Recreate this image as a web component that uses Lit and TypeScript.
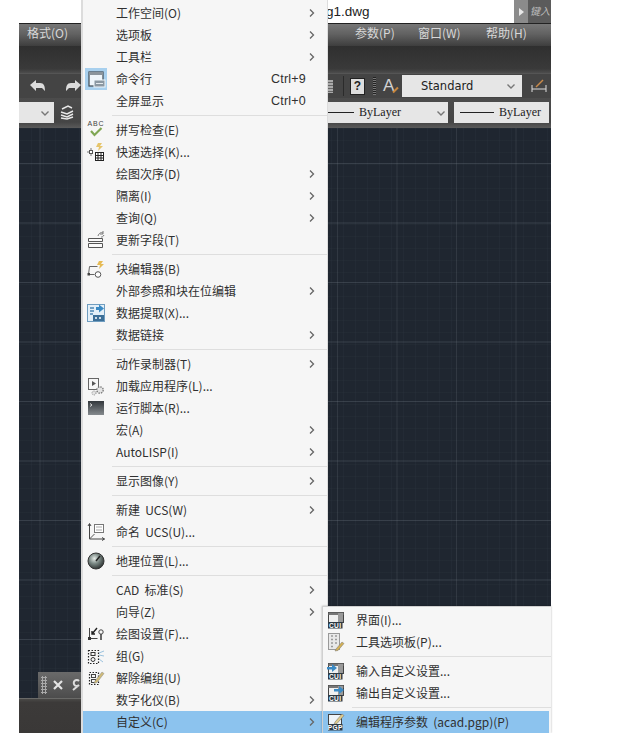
import { LitElement, html, svg, css } from "lit";
import { customElement } from "lit/decorators.js";

const I = {
  cmd: html`<svg viewBox="0 0 22 22" width="22" height="22"><rect x="4" y="4" width="14" height="14" fill="#eef5fa" stroke="#3f4a52" stroke-width="1.200"/><rect x="4" y="4" width="14" height="3" fill="#8a949c"/><rect x="9" y="12" width="11" height="7" fill="#8b98a2" stroke="#eef5fa"/><path d="M11 15.500h7" stroke="#e4eaee"/></svg>`,
  abc: html`<svg viewBox="0 0 22 22" width="22" height="22"><text x="11" y="7" text-anchor="middle" font-size="7" font-family="Liberation Sans" letter-spacing=".8" fill="#444">ABC</text><path d="M6 12l3.500 4 7-7" fill="none" stroke="#7fa653" stroke-width="2.200"/></svg>`,
  quick: html`<svg viewBox="0 0 22 22" width="22" height="22"><path d="M2 11h6M6 7v8" stroke="#777"/><rect x="4.500" y="9.500" width="3" height="3" fill="#fff" stroke="#555"/><path d="M13 2h4l-2 3h3l-5 5 1-4h-3z" fill="#e6c56c"/><rect x="10.500" y="11.500" width="8" height="8" fill="#fff" stroke="#222"/><path d="M13 12v8M16 12v8M11 14.500h8M11 17h8" stroke="#222"/></svg>`,
  field: html`<svg viewBox="0 0 22 22" width="22" height="22"><path d="M3.500 12.500h14v-3h-14zM3.500 14.500h14v4h-14z" fill="#fafafa" stroke="#555"/><path d="M13 7c1-3 3-4 5-3m1 2c-1 2-2 2-3 2" fill="none" stroke="#777"/><path d="M18 2v3h-3" fill="none" stroke="#777"/></svg>`,
  block: html`<svg viewBox="0 0 22 22" width="22" height="22"><path d="M4.500 8.500h8M4.500 8.500l-1 8h6" fill="none" stroke="#666"/><circle cx="13" cy="16.500" r="2.800" fill="#fff" stroke="#555"/><rect x="2.500" y="15" width="2.500" height="2.500" fill="#444"/><path d="M14 3h4l-2 3h3l-5 5 1-4h-3z" fill="#e6bb55"/></svg>`,
  data: html`<svg viewBox="0 0 22 22" width="22" height="22"><rect x="2.500" y="2.500" width="17" height="17" fill="#e3eff8" stroke="#6f9dc0"/><path d="M5 6h4M5 9h4M5 12h3" stroke="#4c87b2" stroke-width="1.500"/><path d="M11 5h3V2.500l5 4-5 4V8h-3z" fill="#3b8ac4"/><rect x="8" y="13" width="11" height="6" fill="#3c6f98"/><path d="M10 16h2M14 16h2" stroke="#fff" stroke-width="1.500"/></svg>`,
  load: html`<svg viewBox="0 0 22 22" width="22" height="22"><rect x="3.500" y="3.500" width="10" height="11" fill="#f6f6f6" stroke="#666"/><path d="M7 6l4 2.500-4 2.500z" fill="#555"/><circle cx="15" cy="15" r="3.200" fill="#e4e4e4" stroke="#777" stroke-width="1.300" stroke-dasharray="1.500 1"/><circle cx="9" cy="18" r="2" fill="#e4e4e4" stroke="#888" stroke-dasharray="1 1"/></svg>`,
  script: html`<svg viewBox="0 0 22 22" width="22" height="22"><defs><linearGradient id="sc" x1="0" y1="0" x2="0" y2="1"><stop offset="0" stop-color="#33383c"/><stop offset="1" stop-color="#858a8e"/></linearGradient></defs><rect x="3" y="4" width="16" height="14" fill="url(#sc)"/><path d="M5 6.500l2 1.500-2 1.500" stroke="#ddd" fill="none"/></svg>`,
  ucs: html`<svg viewBox="0 0 22 22" width="22" height="22"><path d="M4.500 3v15h15" fill="none" stroke="#444"/><path d="M3 5l1.500-2.500L6 5M17 16.500l2.500 1.500-2.500 1.500" fill="none" stroke="#444"/><path d="M4.500 18l5-5" stroke="#555"/><rect x="9.500" y="3.500" width="9" height="8" fill="#fff" stroke="#777"/><path d="M11 6h6M11 9h6" stroke="#aaa"/></svg>`,
  geo: html`<svg viewBox="0 0 22 22" width="22" height="22"><defs><radialGradient id="ge" cx=".4" cy=".35" r=".7"><stop offset="0" stop-color="#e6ece8"/><stop offset=".45" stop-color="#7c8a86"/><stop offset="1" stop-color="#262b2b"/></radialGradient></defs><circle cx="11" cy="11" r="8" fill="url(#ge)" stroke="#333"/><path d="M11 11l4-5" stroke="#222" stroke-width="1.500"/></svg>`,
  settings: html`<svg viewBox="0 0 22 22" width="22" height="22"><path d="M4.500 5v10.500h8" fill="none" stroke="#444"/><rect x="3" y="14" width="3" height="3" fill="#333"/><path d="M12 5l-5 6M7 8v3h3" fill="none" stroke="#222" stroke-width="1.400"/><circle cx="16" cy="9" r="2.200" fill="none" stroke="#444"/><path d="M16 11v6" stroke="#444" stroke-width="1.600"/></svg>`,
  group: html`<svg viewBox="0 0 22 22" width="22" height="22"><rect x="3.500" y="5.500" width="10" height="13" fill="none" stroke="#222" stroke-width="1.200" stroke-dasharray="1.500 1.500"/><rect x="6" y="7.500" width="4" height="3" fill="none" stroke="#333"/><circle cx="8" cy="14.500" r="2" fill="none" stroke="#333"/><path d="M14 8l5-2M14 10l5 1M14 14l4 3" stroke="#9cc3de"/></svg>`,
  ungroup: html`<svg viewBox="0 0 22 22" width="22" height="22"><rect x="4.500" y="5.500" width="9" height="12" fill="none" stroke="#222" stroke-width="1.200" stroke-dasharray="1.500 1.500"/><rect x="6.500" y="7.500" width="4" height="3" fill="none" stroke="#444"/><rect x="6.500" y="12.500" width="4" height="3" fill="none" stroke="#444"/><path d="M10 14l7-9 2 1.500-7 9-3 1z" fill="#d0bb78" stroke="#888" stroke-width=".5"/></svg>`,
};

const label = (t: string) => svg`<rect x="3" y="13" width="14.500" height="6.500" fill="#2d3a44"/><text x="10.200" y="18.700" text-anchor="middle" font-size="6.500" font-weight="700" font-family="Liberation Sans" letter-spacing=".4" fill="#fff">${t}</text>`;
const box = (extra: unknown) => html`<svg viewBox="0 0 22 22" width="22" height="22"><rect x="3.500" y="3.500" width="15" height="10" fill="#f0f0f0" stroke="#444"/><rect x="3.500" y="3.500" width="15" height="2.500" fill="#777"/><rect x="13" y="4" width="5" height="9" fill="#999"/>${extra}${label("CUI")}</svg>`;

const S = {
  cui: box(null),
  palette: html`<svg viewBox="0 0 22 22" width="22" height="22"><rect x="3.500" y="2.500" width="11" height="16" fill="#e8e8e8" stroke="#999"/><path d="M6 5h2M10 5h2M6 8.500h2M10 8.500h2M6 12h2M10 12h2M6 15.500h2" stroke="#999" stroke-width="1.500"/><path d="M11 18l6-7 2 1.500-6 7-3 .5z" fill="#d3b055" stroke="#777" stroke-width=".5"/></svg>`,
  imp: box(svg`<path d="M2 7h5V4l5 4-5 4V9.500H2z" fill="#3b8ac4"/>`),
  exp: box(svg`<path d="M9 7h5V4l5 4-5 4V9.500H9z" fill="#3b8ac4"/>`),
  pgp: html`<svg viewBox="0 0 22 22" width="22" height="22"><rect x="3.500" y="3.500" width="13" height="10" fill="#eef4f8" stroke="#444"/><path d="M10 11l7-8 2 1.500-7 8-3 1z" fill="#e0cd8c" stroke="#666" stroke-width=".5"/>${label("PGP")}</svg>`,
};

type Row = { t: string; i?: unknown; a?: boolean; k?: string; on?: boolean; sel?: boolean };
const MAIN: Row[][] = [
  [
    { t: "工作空间(O)", a: true },
    { t: "选项板", a: true },
    { t: "工具栏", a: true },
    { t: "命令行", k: "Ctrl+9", i: I.cmd, on: true },
    { t: "全屏显示", k: "Ctrl+0" },
  ],
  [
    { t: "拼写检查(E)", i: I.abc },
    { t: "快速选择(K)...", i: I.quick },
    { t: "绘图次序(D)", a: true },
    { t: "隔离(I)", a: true },
    { t: "查询(Q)", a: true },
    { t: "更新字段(T)", i: I.field },
  ],
  [
    { t: "块编辑器(B)", i: I.block },
    { t: "外部参照和块在位编辑", a: true },
    { t: "数据提取(X)...", i: I.data },
    { t: "数据链接", a: true },
  ],
  [
    { t: "动作录制器(T)", a: true },
    { t: "加载应用程序(L)...", i: I.load },
    { t: "运行脚本(R)...", i: I.script },
    { t: "宏(A)", a: true },
    { t: "AutoLISP(I)", a: true },
  ],
  [{ t: "显示图像(Y)", a: true }],
  [
    { t: "新建 UCS(W)", a: true },
    { t: "命名 UCS(U)...", i: I.ucs },
  ],
  [{ t: "地理位置(L)...", i: I.geo }],
  [
    { t: "CAD 标准(S)", a: true },
    { t: "向导(Z)", a: true },
    { t: "绘图设置(F)...", i: I.settings },
    { t: "组(G)", i: I.group },
    { t: "解除编组(U)", i: I.ungroup },
    { t: "数字化仪(B)", a: true },
    { t: "自定义(C)", a: true, sel: true },
  ],
];
const SUB: Row[][] = [
  [
    { t: "界面(I)...", i: S.cui },
    { t: "工具选项板(P)...", i: S.palette },
  ],
  [
    { t: "输入自定义设置...", i: S.imp },
    { t: "输出自定义设置...", i: S.exp },
  ],
  [{ t: "编辑程序参数 (acad.pgp)(P)", i: S.pgp, sel: true }],
];

const chev = html`<svg class="chev" viewBox="0 0 8 10" width="8" height="10"><path d="M2 1.500L5.500 5 2 8.500" fill="none" stroke="#666" stroke-width="1.300"/></svg>`;
const tick = html`<svg class="tick" viewBox="0 0 10 8" width="10" height="8"><path d="M1.500 2.500L5 6l3.500-3.500" fill="none" stroke="#777" stroke-width="1.400"/></svg>`;

@customElement("app-root")
export class AppRoot extends LitElement {
  static styles = css`
    :host { display: block; position: relative; width: 632px; height: 733px; overflow: hidden; background: #fff;
      font-family: "Noto Sans CJK SC", "Liberation Sans", sans-serif; }
    .app { margin-left: 19px; width: 532px; height: 733px; display: flex; flex-direction: column; }
    .title { height: 24px; flex: none; background: #fff; display: flex; align-items: center; border-bottom: 1px solid #222; box-sizing: border-box; }
    .fname { margin-left: 307px; font: 13.500px "Liberation Sans", sans-serif; color: #222; flex: 1; }
    .tabbtn { width: 14px; height: 23px; background: #8b8b8b; display: flex; align-items: center; justify-content: center; }
    .tabbtn i { border-left: 5px solid #e8e8e8; border-top: 4px solid transparent; border-bottom: 4px solid transparent; }
    .tabtxt { width: 23px; height: 23px; background: #5b5b5b; color: #bbb; font-size: 10px; font-style: italic; line-height: 21px; white-space: nowrap; padding-left: 2px; box-sizing: border-box; }
    .menubar { height: 22px; flex: none; background: linear-gradient(#777 0, #626262 45%, #3e3e3e 100%); color: #d8d8d8; font-size: 12px; line-height: 18px;
      display: grid; grid-template-columns: 328px 63px 68px auto; padding-left: 8px; }
    .band { height: 27px; flex: none; background: linear-gradient(#2f2f2f, #3a3a3a 85%, #4d4d4d); }
    .bar1 { height: 25px; flex: none; background: #444; display: flex; align-items: center; box-sizing: border-box; border-top: 1px solid #555; }
    .arr { width: 18px; height: 16px; flex: none; }
    .arr1 { margin-left: 10px; }
    .arr2 { margin-left: 17px; }
    .qic { margin-left: 245px; width: 6px; height: 13px; flex: none; background: repeating-linear-gradient(#aaa 0 2px, #666 2px 3px); }
    .vs { margin-left: 10px; width: 1px; height: 20px; background: #2b2b2b; flex: none; }
    .qbtn { margin-left: 6px; width: 15px; height: 17px; background: #ddd; border: 1px solid #222; box-sizing: border-box; color: #222; font: 700 12px/15px "Liberation Sans", sans-serif; text-align: center; flex: none; }
    .gr { width: 3px; flex: none; margin-left: 8px; height: 18px; background: repeating-linear-gradient(#222 0 1px, #777 1px 2px); }
    .aicon { margin-left: 7px; flex: none; width: 16px; color: #d2d2d2; font: 17px/18px "Liberation Sans", sans-serif; position: relative; }
    .aicon::after { content: ""; position: absolute; left: 9px; top: 12px; width: 7px; height: 2px; background: #c9873e; transform: rotate(-45deg); }
    .drop { background: #e6e6e6; display: flex; align-items: center; box-sizing: border-box; color: #222; flex: none; }
    .std { margin-left: 3px; width: 120px; height: 22px; font: 11.500px "DejaVu Sans", sans-serif; padding: 0 6px 0 19px; justify-content: space-between; }
    .dim { margin-left: 8px; width: 18px; height: 16px; flex: none; }
    .bar2 { height: 30px; flex: none; background: linear-gradient(#4c4c4c, #454545 80%, #5a5a5a); display: flex; align-items: flex-start; padding-top: 4px; box-sizing: border-box; }
    .d0 { width: 35px; height: 21px; justify-content: flex-end; padding-right: 4px; }
    .layer { margin-left: 6px; margin-top: 3px; width: 14px; height: 15px; flex: none; }
    .d1 { margin-left: 251px; width: 123px; height: 21px; font: 12px "Liberation Serif", serif; padding: 0 1px 0 0; }
    .d2 { margin-left: 6px; width: 95px; height: 21px; font: 12px "Liberation Serif", serif; padding: 0 0 0 6px; flex: none; }
    .ln { height: 1px; background: #222; margin-right: 5px; flex: none; width: 34px; }
    .d1 .ln { width: 29px; }
    .d1 .tick { margin-left: auto; margin-right: 1px; }
    .canvas { flex: 1; background-color: #1f2630;
      background-image:
        linear-gradient(rgba(120,130,140,.28) 1px, transparent 1px),
        linear-gradient(90deg, rgba(120,130,140,.2) 1px, transparent 1px),
        linear-gradient(rgba(120,130,140,.04) 1px, transparent 1px),
        linear-gradient(90deg, rgba(120,130,140,.05) 1px, transparent 1px);
      background-size: 59.500px 59.500px, 59.500px 59.500px, 12px 12px, 12px 12px;
      background-position: 0 35px, 20.500px 0, 0 0, 0 0; }
    .status { height: 35px; flex: none; background: linear-gradient(#4a4947 0, #3c3a39 10%, #3a3837 100%); border-top: 1px solid #6a6a68; box-sizing: border-box; }
    .float { position: absolute; left: 38px; top: 672px; width: 44px; height: 26px; background: linear-gradient(#6a6a6a, #4c4c4c); display: flex; align-items: center; gap: 4px; padding-left: 3px; box-sizing: border-box; }
    .grip { width: 6px; height: 18px; background-image: radial-gradient(#aaa 1px, transparent 1.200px); background-size: 3px 3px; flex: none; }
    .x { width: 12px; height: 12px; margin-left: 1px; flex: none; }
    .wr { width: 12px; height: 12px; margin-left: 1px; flex: none; }

    .menu { position: absolute; background: #f6f6f6; box-sizing: border-box; color: #303030; font-size: 12px; word-spacing: 2.500px; }
    .main { left: 81px; top: 0; width: 246px; height: 733px; padding-top: 2px; border-left: 2px solid #dcdcdc; box-shadow: 1px 0 0 #ddd; }
    .sub { left: 322px; top: 606px; width: 229px; height: 127px; padding-top: 2px; border: 1px solid #d0d0d0; border-bottom: 0; border-right: 0; box-shadow: 0 0 2px rgba(0,0,0,.3); }
    .row { height: 22px; display: grid; grid-template-columns: 33px 1fr auto 19px; align-items: center; white-space: nowrap; line-height: 22px; }
    .sub .row { grid-template-columns: 33px 1fr auto 0; margin-right: 2px; }
    .row.sel { background: #8cc3ee; }
    .ic { width: 22px; height: 22px; margin-left: 2px; display: block; }
    .ic svg { display: block; }
    .ic.on { background: #a8d0ee; }
    .key { font: 12.500px "Liberation Sans", sans-serif; margin-right: 2px; letter-spacing: .2px; }
    .chev { display: block; }
    .sep { height: 7px; margin-left: 29px; display: flex; align-items: center; }
    .sep::before { content: ""; flex: 1; height: 1px; background: #dedede; }
  `;

  private rows(groups: Row[][]) {
    return groups.map(
      (g, n) => html`${n ? html`<div class="sep"></div>` : ""}${g.map(
        (r) => html`<div class="row ${r.sel ? "sel" : ""}">
          <span class="ic ${r.on ? "on" : ""}">${r.i ?? ""}</span>
          <span>${r.t}</span>
          <span class="key">${r.k ?? ""}</span>
          <span>${r.a ? chev : ""}</span>
        </div>`
      )}`
    );
  }

  render() {
    return html`
      <div class="app">
        <div class="title"><span class="fname">g1.dwg</span><span class="tabbtn"><i></i></span><span class="tabtxt">键入</span></div>
        <div class="menubar"><span>格式(O)</span><span>参数(P)</span><span>窗口(W)</span><span>帮助(H)</span></div>
        <div class="band"></div>
        <div class="bar1">
          <svg class="arr arr1" viewBox="0 0 18 16"><path d="M1 7l6-5v3h4c4 0 5 3 5 8l-3-3H7v3z" fill="#dcdcdc"/></svg>
          <svg class="arr arr2" viewBox="0 0 18 16"><path d="M17 7l-6-5v3H7c-4 0-5 3-5 8l3-3h6v3z" fill="#dcdcdc"/></svg>
          <span class="qic"></span><span class="vs"></span>
          <span class="qbtn">?</span><span class="gr"></span>
          <span class="aicon">A</span>
          <span class="drop std">Standard ${tick}</span>
          <svg class="dim" viewBox="0 0 18 16"><path d="M2 7v7M16 7v7M2 11h14" stroke="#ddd" fill="none"/><path d="M6 9l7-7" stroke="#c98a4a" stroke-width="1.500"/></svg>
        </div>
        <div class="bar2">
          <span class="drop d0">${tick}</span>
          <svg class="layer" viewBox="0 0 14 15"><path d="M2 4l6-3 4 2M1 7l6 2 6-3M1 10l6 2 6-3M1 13l6 1 6-2" fill="none" stroke="#e8e8e8" stroke-width="1.400"/></svg>
          <span class="drop d1"><span class="ln"></span>ByLayer${tick}</span>
          <span class="drop d2"><span class="ln"></span>ByLayer</span>
        </div>
        <div class="canvas"></div>
        <div class="status"></div>
      </div>
      <div class="float">
        <span class="grip"></span>
        <svg class="x" viewBox="0 0 12 12"><path d="M2 2l8 8M10 2l-8 8" stroke="#e4e4e4" stroke-width="2.200"/></svg>
        <svg class="wr" viewBox="0 0 12 12"><path d="M10 2a3 3 0 1 0 0 4L4 11" fill="none" stroke="#ddd" stroke-width="2"/></svg>
      </div>
      <div class="menu main">${this.rows(MAIN)}</div>
      <div class="menu sub">${this.rows(SUB)}</div>
    `;
  }
}
